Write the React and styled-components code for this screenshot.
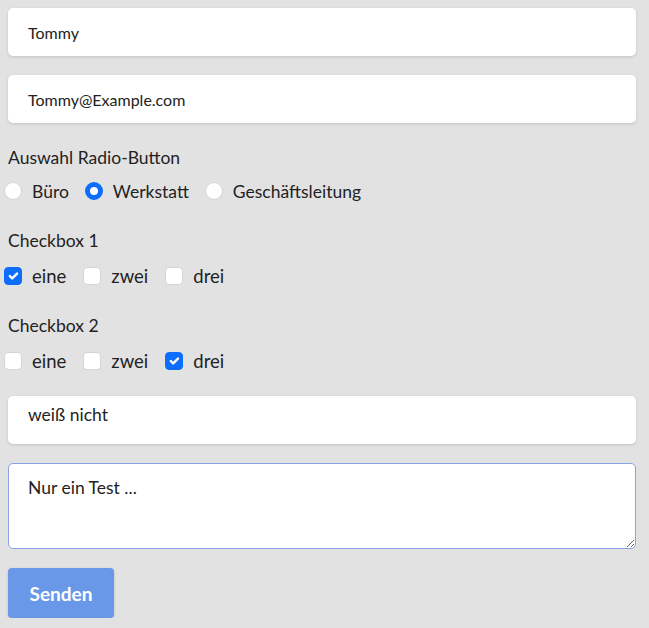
import React, { useState } from 'react'
import styled, { createGlobalStyle } from 'styled-components'

const GlobalStyle = createGlobalStyle`
  html, body {
    margin: 0;
    padding: 0;
    background: #e2e2e2;
  }
  body {
    font-family: Lato, "Noto Sans", sans-serif;
    color: #222;
  }
`

const Form = styled.form`
  width: 628px;
  padding: 8px 0 0 8px;
  display: flex;
  flex-direction: column;
`

const TextInput = styled.input`
  box-sizing: border-box;
  width: 100%;
  height: 48px;
  border: none;
  border-radius: 5px;
  background: #fff;
  box-shadow: 0 1px 3px rgba(0, 0, 0, 0.14);
  padding: ${(p) => p.$pad || '0 20px'};
  font-family: inherit;
  font-size: ${(p) => p.$size || '16px'};
  color: #222;
  margin-bottom: 19px;
  outline: none;
`

const Label = styled.div`
  font-size: 17.5px;
  line-height: 24px;
  margin-bottom: ${(p) => p.$gap || '10px'};
`

const Group = styled.div`
  margin-top: ${(p) => p.$mt || '0'};
  margin-bottom: ${(p) => p.$mb || '25px'};
`

const Options = styled.div`
  display: flex;
  align-items: center;
  height: 26px;
  margin-left: -4px;
`

const Option = styled.label`
  display: flex;
  align-items: center;
  font-size: ${(p) => p.$size || '17.5px'};
  margin-right: ${(p) => p.$gap || '16px'};
  cursor: pointer;
`

const Radio = styled.input.attrs({ type: 'radio' })`
  appearance: none;
  width: 18px;
  height: 18px;
  margin: 0 10px 0 0;
  border-radius: 50%;
  background: #fff;
  border: 1px solid #d4d4d4;
  box-sizing: border-box;
  &:checked {
    border: 5px solid #0d6efd;
  }
`

const Check = styled.input.attrs({ type: 'checkbox' })`
  appearance: none;
  width: 18px;
  height: 18px;
  margin: 0 10px 0 0;
  border-radius: 4px;
  background: #fff;
  border: 1px solid #d4d4d4;
  box-sizing: border-box;
  &:checked {
    border-color: #0d6efd;
    background: #0d6efd url("data:image/svg+xml,%3csvg xmlns='http://www.w3.org/2000/svg' viewBox='0 0 20 20'%3e%3cpath fill='none' stroke='%23fff' stroke-linecap='round' stroke-linejoin='round' stroke-width='3' d='M6 10l3 3l6-6'/%3e%3c/svg%3e") center/100% no-repeat;
  }
`

const TextArea = styled.textarea`
  box-sizing: border-box;
  width: 100%;
  height: 86px;
  border: 1px solid #87a3e4;
  border-radius: 5px;
  background: #fff;
  padding: 13px 19px;
  font-family: inherit;
  font-size: 17.5px;
  color: #222;
  outline: none;
  margin-bottom: 19px;
  display: block;
`

const Button = styled.button`
  width: 106px;
  height: 50px;
  border: none;
  border-radius: 4px;
  background: #6a98e8;
  color: #fff;
  font-family: inherit;
  font-weight: 700;
  font-size: 19px;
  box-shadow: 0 1px 3px rgba(0, 0, 0, 0.15);
  cursor: pointer;
`

const CheckGroup = ({ title, checked, onToggle, mb }) => (
  <Group $mb={mb}>
    <Label>{title}</Label>
    <Options>
      {['eine', 'zwei', 'drei'].map((o) => (
        <Option key={o} $size="18.5px" $gap="17px">
          <Check checked={checked.includes(o)} onChange={() => onToggle(o)} />
          {o}
        </Option>
      ))}
    </Options>
  </Group>
)

const App = () => {
  const [role, setRole] = useState('Werkstatt')
  const [cb1, setCb1] = useState(['eine'])
  const [cb2, setCb2] = useState(['drei'])
  const toggle = (list, set) => (o) =>
    set(list.includes(o) ? list.filter((x) => x !== o) : [...list, o])

  return (
    <>
      <GlobalStyle />
      <Form onSubmit={(e) => e.preventDefault()}>
        <TextInput defaultValue="Tommy" />
        <TextInput defaultValue="Tommy@Example.com" />
        <Group $mt="4px">
          <Label $gap="8px">Auswahl Radio-Button</Label>
          <Options>
            {['Büro', 'Werkstatt', 'Geschäftsleitung'].map((r) => (
              <Option key={r}>
                <Radio name="role" checked={role === r} onChange={() => setRole(r)} />
                {r}
              </Option>
            ))}
          </Options>
        </Group>
        <CheckGroup title="Checkbox 1" checked={cb1} onToggle={toggle(cb1, setCb1)} />
        <CheckGroup title="Checkbox 2" checked={cb2} onToggle={toggle(cb2, setCb2)} mb="22px" />
        <TextInput defaultValue="weiß nicht" $pad="0 20px 12px" $size="17.5px" />
        <TextArea defaultValue="Nur ein Test ..." />
        <Button type="submit">Senden</Button>
      </Form>
    </>
  )
}

export default App
